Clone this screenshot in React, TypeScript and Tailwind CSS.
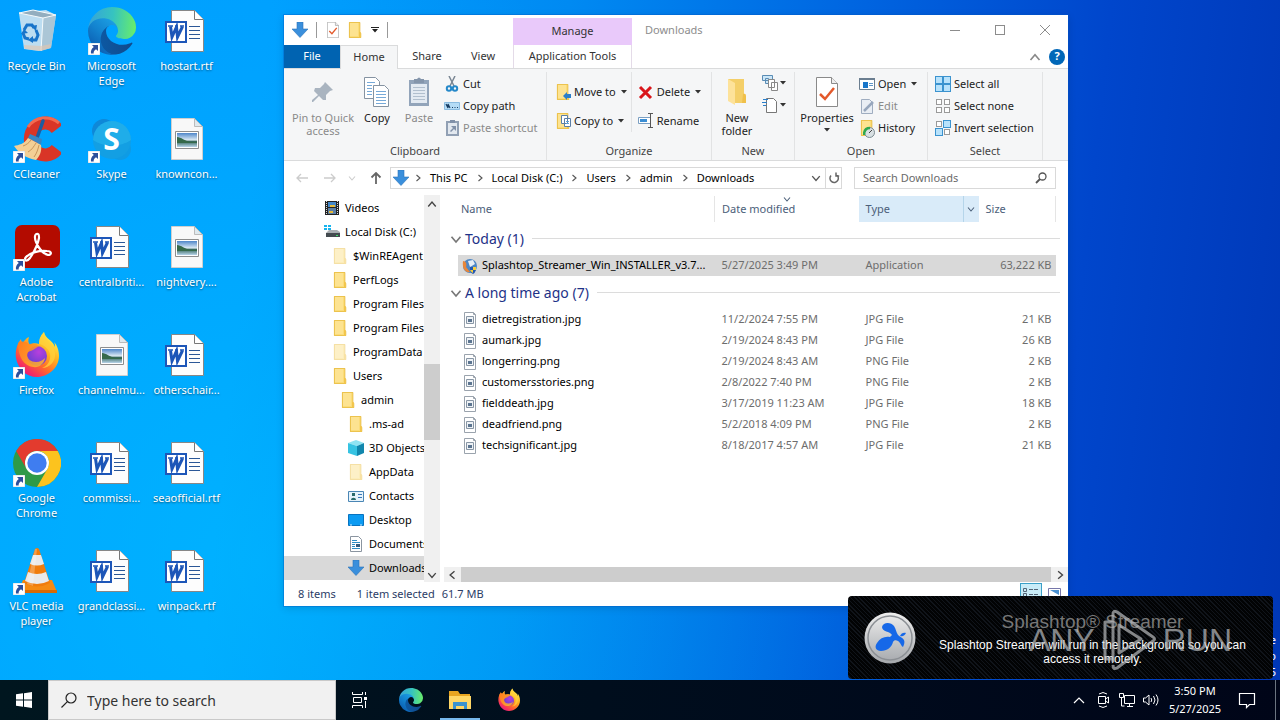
import React from "react";

type P = { className?: string };

const Edge = ({ className = "size-12" }: P) => (
  <svg viewBox="0 0 256 256" className={className} aria-hidden="true">
    <defs>
      <linearGradient id="ea" x1="60" y1="177" x2="240" y2="177" gradientUnits="userSpaceOnUse">
        <stop offset="0" stopColor="#0c59a4" /><stop offset="1" stopColor="#114a8b" />
      </linearGradient>
      <linearGradient id="eb" x1="150" y1="90" x2="40" y2="220" gradientUnits="userSpaceOnUse">
        <stop offset="0" stopColor="#1b9de2" /><stop offset=".5" stopColor="#1383cf" /><stop offset="1" stopColor="#0c62b5" />
      </linearGradient>
      <linearGradient id="ec" x1="10" y1="70" x2="250" y2="90" gradientUnits="userSpaceOnUse">
        <stop offset="0" stopColor="#35a5d8" /><stop offset=".5" stopColor="#36c3c0" /><stop offset="1" stopColor="#66eb6e" />
      </linearGradient>
    </defs>
    <path fill="url(#ea)" d="M231 190.5a94 94 0 0 1-10.500 4.700 102 102 0 0 1-35.900 6.500c-47.300 0-88.500-32.500-88.500-74.300A31.500 31.500 0 0 1 112.500 100c-42.800 1.800-53.800 46.400-53.800 72.500 0 73.900 68 81.400 82.800 81.400 7.900 0 19.800-2.300 27-4.600l1.300-.4a128 128 0 0 0 66.600-52.800 4 4 0 0 0-5.300-5.600z" />
    <path fill="url(#eb)" d="M105.700 241.400A79 79 0 0 1 83 220a81 81 0 0 1 29.500-120c3.100-1.400 8.400-4.100 15.500-4a32 32 0 0 1 25.700 13 32 32 0 0 1 6.400 18.700c0-.2 24.400-79.600-80-79.600C36 48.100 0 89.800 0 126.400a130 130 0 0 0 12.100 56 128 128 0 0 0 156.400 67.100 75.500 75.500 0 0 1-62.800-8z" />
    <path fill="url(#ec)" d="M152.300 148.900c-.8 1-3.300 2.500-3.300 5.600 0 2.600 1.700 5.100 4.700 7.200 14.400 10 41.500 8.700 41.600 8.700a60 60 0 0 0 30.300-8.300A61.400 61.400 0 0 0 256 109.500c.3-22.400-8-37.300-11.300-44C223.500 24 177.700.3 128 .3A128 128 0 0 0 0 126.500c.5-36.500 36.800-66 80-66 3.500 0 23.500.3 42 10 16.300 8.600 24.900 19 30.900 29.300 6.100 10.600 7.200 24.100 7.200 29.500s-2.700 13.300-7.800 19.600z" />
  </svg>
);

const Firefox = ({ className = "size-12" }: P) => (
  <svg viewBox="0 0 48 48" className={className} aria-hidden="true">
    <defs>
      <linearGradient id="fa" x1="40" y1="5" x2="10" y2="44" gradientUnits="userSpaceOnUse">
        <stop offset="0" stopColor="#fff44f" /><stop offset=".35" stopColor="#ffb01f" /><stop offset=".62" stopColor="#ff6a2b" /><stop offset=".85" stopColor="#f5305f" /><stop offset="1" stopColor="#e31587" />
      </linearGradient>
      <radialGradient id="fb" cx=".6" cy=".3" r=".8">
        <stop offset="0" stopColor="#b83fdd" /><stop offset="1" stopColor="#5b3fd0" />
      </radialGradient>
      <linearGradient id="fc" x1="0" y1="0" x2="1" y2="1">
        <stop offset="0" stopColor="#ff7a1c" /><stop offset="1" stopColor="#ffbd2e" />
      </linearGradient>
    </defs>
    <path fill="url(#fa)" d="M31 1c-4 4-5 8-5 12-3-1-7-1-9 1-2-2-2-5-1-8-3 1-5 4-6 6-1-1-2-2-2-4-4 5-6 12-5 19 2 11 10 19 21 19s22-9 22-21c0-6-2-11-5-14 1 2 1 3 1 5-2-7-10-8-11-15z" />
    <circle cx="24" cy="25" r="10" fill="url(#fb)" />
    <path fill="url(#fc)" d="M5 12c3-2 7-2 11 1 3-1 7-1 10 2-2 1-4 3-6 4-2 1-5 1-6 4 0 5 4 8 9 8 4 0 7-2 9-4-1 6-6 10-12 9C11 35 5 26 5 12z" opacity=".85" />
    <path fill="#ffd23c" d="M31 1c-4 4-5 8-5 12 5 1 10 5 11 10 1 6-2 12-8 14 8 0 14-7 13-15-1-8-10-12-11-21z" opacity=".75" />
  </svg>
);

const Shortcut = () => (
  <svg viewBox="0 0 12 12" className="absolute bottom-0 left-0 size-3" aria-hidden="true">
    <path fill="#fff" stroke="#b9c4cf" strokeWidth=".6" d="M0 0h12v12H0z" />
    <path fill="#2c4f9c" d="M4 2h6v6L8 6.200C6 7.500 5.500 8.500 5.700 10.500H3C2.500 8 3.500 5.600 5.800 4z" />
  </svg>
);

const Recycle = () => (
  <svg viewBox="0 0 48 48" className="size-12" aria-hidden="true">
    <path fill="#dde8ef" opacity=".85" d="M6 6 33 3l10 5-5 33-12 3-15-2z" />
    <path fill="#a9c3d3" opacity=".9" d="m30 11 13-3-5 33-10 3z" />
    <path fill="#93aebf" d="m6 6 14-3 23 5-13 3z" />
    <path fill="none" stroke="#f5fafc" d="m6 6 14-3 23 5-13 3zM30 11l-2 33" />
    <path fill="#e5c6ad" opacity=".6" d="m11 38 17 1 10-2-1 4-10 3-15-2z" />
    <g fill="none" stroke="#1874c9" strokeWidth="3"><path d="m11 23 3-5h5l2 3" /><path d="m23 23 2 5-2 5h-4" /><path d="m16 32-4-1-2-5" /></g>
    <path fill="#1874c9" d="m18 19 6-1-1 6zM20 29v7l-5-3zM8 27l3-5 4 4z" />
  </svg>
);

const Word = () => (
  <svg viewBox="0 0 48 48" className="size-12" aria-hidden="true">
    <path fill="#fdfdfd" stroke="#878787" d="M8.500 3.500h23l9 9v32h-32z" />
    <path fill="#fff" stroke="#777" d="M31.500 3.500v9h9" />
    <path stroke="#2b5797" d="M26 19.500h11M26 23.500h11M26 27.500h11M26 31.500h11" />
    <path fill="#fff" stroke="#1d56b8" strokeWidth="2" d="M3 15h20v20H3z" />
    <path fill="none" stroke="#1d56b8" strokeWidth="3" d="M7.500 19.500 9 30l4.500-10 1 10 5-10.500" />
    <path stroke="#1d56b8" strokeWidth="1.500" d="M5 19h5M12 19h3M17 19h4" />
  </svg>
);

const Photo = () => (
  <svg viewBox="0 0 48 48" className="size-12" aria-hidden="true">
    <defs><linearGradient id="ph" x1="0" y1="0" x2="0" y2="1"><stop offset="0" stopColor="#4e86c9" /><stop offset=".5" stopColor="#dceaf4" /><stop offset=".6" stopColor="#35675a" /><stop offset="1" stopColor="#b8d4ea" /></linearGradient></defs>
    <path fill="#f8f8f8" stroke="#cfcfcf" d="M8.500 3.500h23l8 8v33h-31z" />
    <path fill="#dfe9ee" stroke="#bbb" d="M31.500 3.500v8h8z" />
    <path fill="#fff" stroke="#8d8d8d" d="M12.500 16.500h23v17h-23z" />
    <path fill="url(#ph)" d="M14 18h20v14H14z" />
    <path fill="#35694a" d="M14 22c4 0 8 4 13 5h7v1H14z" />
  </svg>
);

const CCleaner = () => (
  <svg viewBox="0 0 48 48" className="size-12" aria-hidden="true">
    <path fill="none" stroke="#d93527" strokeWidth="13" d="M44 14A15 16 0 1 0 44 34" />
    <path fill="none" stroke="#f26a50" strokeWidth="3" d="M46 8A21 21 0 0 0 15 12" />
    <path stroke="#1d5ca0" strokeWidth="3.500" strokeLinecap="round" d="m30 6-6 17" />
    <path fill="#3787c6" d="m17 19 12 5-1 6-13-7z" />
    <path fill="#f3cf95" d="M15 23c-4 6-9 7-14 8 6 9 13 12 22 14 4-4 6-9 5-15z" />
    <path stroke="#c9955a" fill="none" d="M10 31c3-1 6-3 8-6M15 37c4-2 6-6 8-9M21 42c3-4 4-8 5-12" />
  </svg>
);

const Skype = () => (
  <div className="relative flex size-12 items-center justify-center">
    <svg viewBox="0 0 48 48" className="absolute inset-0" aria-hidden="true">
      <circle cx="16" cy="16" r="12" fill="#0e88d8" /><circle cx="32" cy="34" r="11" fill="#0f9be4" /><circle cx="24" cy="25" r="19" fill="#139fe3" />
      <path fill="#2bbbf0" opacity=".5" d="M5 25a19 19 0 0 1 38 0c-10 7-27 8-38 0z" />
    </svg>
    <span className="relative font-['Open_Sans',sans-serif] text-[30px] leading-7 font-bold text-white">S</span>
  </div>
);

const Acrobat = () => (
  <svg viewBox="0 0 48 48" className="size-12" aria-hidden="true">
    <rect x="2" y="2" width="45" height="43" rx="7" fill="#b30b00" />
    <path fill="none" stroke="#fff" strokeWidth="2.200" d="M25 11c-3-1-4 3-2 8 3 7 8 12 12 13 4 0 4-4-1-4-8-1-17 2-21 6-3 4 1 5 4 1 4-6 8-14 9-20 0-2 0-4-1-4z" />
  </svg>
);

const Chrome = () => (
  <svg viewBox="0 0 48 48" className="size-12" aria-hidden="true">
    <circle cx="24" cy="24" r="24" fill="#2e9a48" />
    <path fill="#e33b2e" d="M3.200 12A24 24 0 0 1 44.800 12H24a12 12 0 0 0-10.400 18z" />
    <path fill="#fcc31e" d="M44.800 12A24 24 0 0 1 24 48l10.400-18A12 12 0 0 0 24 12z" />
    <circle cx="24" cy="24" r="12" fill="#fff" /><circle cx="24" cy="24" r="9.700" fill="#3f7df0" />
  </svg>
);

const Vlc = () => (
  <svg viewBox="0 0 48 48" className="size-12" aria-hidden="true">
    <path fill="#f58a12" d="m10 33-5 12h39l-5-12z" /><path fill="#d86a05" d="M5 43h39v3H5z" />
    <path fill="#f07c0c" d="M22 2q2-2 4 0l11 34q-13 7-26 0z" />
    <path fill="#e9e9e9" d="M20 8h8l3 9q-7 3-14 0z" /><path fill="#e9e9e9" d="M15 25q9 4 18 0l3 9q-12 6-24 0z" />
    <path fill="#fff" opacity=".25" d="M22 2 14 37l6 2 4-37z" />
  </svg>
);

const Folder = ({ className = "size-4" }: P) => (
  <svg viewBox="0 0 16 16" className={className} aria-hidden="true">
    <path fill="#fbdc78" d="M2 0h11v10l1 1v5H2z" /><path fill="#ffe9a5" d="M3 1h8v13H3z" opacity=".55" /><path fill="none" stroke="#e6b93e" strokeWidth=".8" d="M2.400.400h10.500v10l.9.800v4.400H2.400z" /><path fill="#f3c54b" d="M12 10h1.500v5.500H12z" />
  </svg>
);

const Down = ({ className = "size-4" }: P) => (
  <svg viewBox="0 0 16 16" className={className} aria-hidden="true">
    <path fill="#3a8fdc" stroke="#2b74bb" strokeWidth=".6" d="M5 0h6v7h5l-8 8.500L0 7h5z" />
  </svg>
);

const Sheet = ({ className = "size-4" }: P) => (
  <svg viewBox="0 0 16 16" className={className} aria-hidden="true">
    <path fill="#fff" stroke="#9aa3ad" d="M2.500.5h9l2 2v13h-11z" /><path fill="none" stroke="#9aa3ad" d="M11.500.5v2h2" /><path fill="#eef2f6" stroke="#8896a5" d="M4.500 4.500h7v7h-7z" /><path fill="#5c7590" d="M6 7h4v3H6z" />
  </svg>
);

const Check = ({ className }: P) => (
  <svg viewBox="0 0 22 30" className={className} aria-hidden="true">
    <path fill="#fff" stroke="#8a8a8a" d="M.5.500h15l6 6v23H.5z" /><path fill="#eee" stroke="#8a8a8a" d="M15.500.5v6h6" /><path fill="none" stroke="#e3592b" strokeWidth="2.500" d="m4 17 5 5 9-11" />
  </svg>
);

const Chev = ({ dir, className = "size-2" }: P & { dir: "up" | "down" | "left" | "right" }) => {
  const d = { up: "m1 6 3-3.500 3 3.500", down: "m1 2.500 3 3.500 3-3.500", left: "M6 1 2.500 4 6 7", right: "M2.500 1 6 4 2.500 7" }[dir];
  return <svg viewBox="0 0 8 8" className={className} aria-hidden="true"><path d={d} fill="none" stroke="currentColor" strokeWidth="1.100" /></svg>;
};

const Caret = ({ className = "" }: P) => (
  <svg viewBox="0 0 6 4" className={`h-1 w-1.5 shrink-0 ${className}`} aria-hidden="true"><path d="M0 0h6L3 3.500z" fill="#333" /></svg>
);

const desktop: { label: string; icon: React.ReactNode; link?: boolean }[] = [
  { label: "Recycle Bin", icon: <Recycle /> },
  { label: "Microsoft Edge", icon: <Edge />, link: true },
  { label: "hostart.rtf", icon: <Word /> },
  { label: "CCleaner", icon: <CCleaner />, link: true },
  { label: "Skype", icon: <Skype />, link: true },
  { label: "knowncon...", icon: <Photo /> },
  { label: "Adobe Acrobat", icon: <Acrobat />, link: true },
  { label: "centralbriti...", icon: <Word /> },
  { label: "nightvery....", icon: <Photo /> },
  { label: "Firefox", icon: <Firefox />, link: true },
  { label: "channelmu...", icon: <Photo /> },
  { label: "otherschair...", icon: <Word /> },
  { label: "Google Chrome", icon: <Chrome />, link: true },
  { label: "commissi...", icon: <Word /> },
  { label: "seaofficial.rtf", icon: <Word /> },
  { label: "VLC media player", icon: <Vlc />, link: true },
  { label: "grandclassi...", icon: <Word /> },
  { label: "winpack.rtf", icon: <Word /> },
];

const Videos = () => (
  <svg viewBox="0 0 16 16" className="size-4" aria-hidden="true"><path fill="#222" d="M1 1h14v14H1z" /><path fill="#4386c7" d="M4 2h8v5H4z" /><path fill="#5b7ea5" d="M4 8h8v6H4z" /><path fill="#e4b93a" d="M6 5h5v2H6zM5 11h4v2H5z" /><path stroke="#ddd" strokeDasharray="1 1" d="M2.500 1v14M13.500 1v14" /></svg>
);
const Disk = () => (
  <svg viewBox="0 0 16 16" className="size-4" aria-hidden="true"><path fill="#18b4ee" d="M0 1h3v2H0zM4 1h3v2H4zM0 4h3v2H0zM4 4h3v2H4z" /><path fill="#a9aeb2" d="m3 8 2-2h8l3 2v1H2z" /><path fill="#444b50" d="M2 9h14v4H2z" /><path fill="#3ee06b" d="M12 11h2v1h-2z" /></svg>
);
const Cube = () => (
  <svg viewBox="0 0 16 16" className="size-4" aria-hidden="true"><path fill="#8fe4f3" d="m0 3 8-3 8 3-7 3z" /><path fill="#36c3e2" d="m0 3 9 3v10l-9-3z" /><path fill="#1187ad" d="m9 6 7-3v10l-7 3z" /></svg>
);
const Contact = () => (
  <svg viewBox="0 0 16 16" className="size-4" aria-hidden="true"><path fill="#e6f3fb" stroke="#4a86b5" d="M.5 3.500h15v10H.5z" /><path fill="#2a6a6a" d="M3 12c0-3 5-3 5 0zM4 5h3v3H4z" /><path stroke="#3a78b8" d="M10 6.500h4M10 9.500h4" /></svg>
);
const Monitor = () => (
  <svg viewBox="0 0 16 16" className="size-4" aria-hidden="true"><path fill="#0c9bf2" stroke="#0873c0" d="M.5 2.500h15v11H.5z" /><path stroke="#cfeaff" d="M2 13h2M12 13h2" /></svg>
);
const Doc = () => (
  <svg viewBox="0 0 16 16" className="size-4" aria-hidden="true"><path fill="#fff" stroke="#8b95a0" d="M2.500.5h8l3 3v12h-11z" /><path stroke="#2d8ec4" d="M4 4.500h5M4 6.500h8M4 8.500h3M4 10.500h3M4 12.500h8" /><path fill="#355c7d" d="M8 8h4v3H8z" /></svg>
);

const tree: { label: string; pad: string; icon: React.ReactNode; sel?: boolean }[] = [
  { label: "Videos", pad: "pl-10", icon: <Videos /> },
  { label: "Local Disk (C:)", pad: "pl-10", icon: <Disk /> },
  { label: "$WinREAgent", pad: "pl-12", icon: <Folder className="size-4 opacity-50" /> },
  { label: "PerfLogs", pad: "pl-12", icon: <Folder /> },
  { label: "Program Files", pad: "pl-12", icon: <Folder /> },
  { label: "Program Files (x86)", pad: "pl-12", icon: <Folder /> },
  { label: "ProgramData", pad: "pl-12", icon: <Folder className="size-4 opacity-50" /> },
  { label: "Users", pad: "pl-12", icon: <Folder /> },
  { label: "admin", pad: "pl-14", icon: <Folder /> },
  { label: ".ms-ad", pad: "pl-16", icon: <Folder /> },
  { label: "3D Objects", pad: "pl-16", icon: <Cube /> },
  { label: "AppData", pad: "pl-16", icon: <Folder className="size-4 opacity-50" /> },
  { label: "Contacts", pad: "pl-16", icon: <Contact /> },
  { label: "Desktop", pad: "pl-16", icon: <Monitor /> },
  { label: "Documents", pad: "pl-16", icon: <Doc /> },
  { label: "Downloads", pad: "pl-16", icon: <Down />, sel: true },
];

const files = [
  ["dietregistration.jpg", "11/2/2024 7:55 PM", "JPG File", "21 KB"],
  ["aumark.jpg", "2/19/2024 8:43 PM", "JPG File", "26 KB"],
  ["longerring.png", "2/19/2024 8:43 AM", "PNG File", "2 KB"],
  ["customersstories.png", "2/8/2022 7:40 PM", "PNG File", "2 KB"],
  ["fielddeath.jpg", "3/17/2019 11:23 AM", "JPG File", "18 KB"],
  ["deadfriend.png", "5/2/2018 4:09 PM", "PNG File", "2 KB"],
  ["techsignificant.jpg", "8/18/2017 4:57 AM", "JPG File", "21 KB"],
];

const Group = ({ label, width, children }: { label: string; width: string; children: React.ReactNode }) => (
  <section className={`flex shrink-0 flex-col border-r border-[#e2e3e4] ${width}`}>
    <div className="flex h-[71px] items-start">{children}</div>
    <h2 className="text-center leading-4 text-[#444]">{label}</h2>
  </section>
);

const Cmd = ({ icon, label, caret, off }: { icon: React.ReactNode; label: string; caret?: boolean; off?: boolean }) => (
  <button className={`flex h-[22px] items-center gap-[3px] whitespace-nowrap ${off ? "text-[#8a8a8a]" : "text-[#222]"}`}>
    {icon}<span>{label}</span>{caret && <Caret className="ml-0.5" />}
  </button>
);

const Big = ({ icon, label, width, off, caret }: { icon: React.ReactNode; label: string; width: string; off?: boolean; caret?: boolean }) => (
  <button className={`flex flex-col items-center leading-[13px] ${width} ${off ? "text-[#8a8a8a]" : "text-[#222]"}`}>
    <span className="flex h-[39px] items-center">{icon}</span><span>{label}</span>{caret && <Caret className="mt-1" />}
  </button>
);

const Squares = ({ fill }: { fill: boolean[] }) => (
  <svg viewBox="0 0 16 16" className="size-4" aria-hidden="true">
    {fill.map((f, i) => {
      const x = (i % 2) * 8 + 1.5, y = Math.floor(i / 2) * 8 + 1.5;
      return f
        ? <rect key={i} x={x - 1} y={y - 1} width="7" height="7" fill="#b8e2fb" stroke="#3b93cf" />
        : <rect key={i} x={x} y={y} width="5" height="5" fill="#fff" stroke="#9a9a9a" />;
    })}
  </svg>
);

const GroupRow = ({ label }: { label: string }) => (
  <tr>
    <th colSpan={4} scope="colgroup" className="h-[33px] p-0 font-normal">
      <div className="-mr-1 -ml-2 flex items-center text-[14px] text-[#1e3287]">
        <Chev dir="down" className="size-3 text-[#777]" />
        <span className="ml-[3px]">{label}</span>
        <span className="ml-2 h-px flex-1 bg-[#dcdcdc]" />
      </div>
    </th>
  </tr>
);

const Explorer = () => (
  <main className="absolute top-[15px] left-[284px] flex w-[784px] flex-col bg-white text-[11px] text-black shadow-[0_0_0_1px_rgba(0,90,200,0.35),0_2px_8px_rgba(0,0,0,0.15)]">
    <header className="flex h-[30px] items-stretch">
      <div className="flex w-[229px] items-center pl-2">
        <Down />
        <span className="ml-2 h-4 w-px bg-[#999]" />
        <Check className="ml-2.5 h-4 w-3" />
        <Folder className="ml-2 size-4" />
        <svg viewBox="0 0 8 6" className="ml-2 h-1.5 w-2" aria-hidden="true"><path d="M0 0h8v1H0zM1 2h6L4 5.500z" fill="#222" /></svg>
        <span className="ml-2 h-4 w-px bg-[#999]" />
      </div>
      <div className="mt-[3px] flex w-[119px] items-center justify-center bg-[#e9c9fa] text-[#333]">Manage</div>
      <h1 className="flex flex-1 items-center pl-[13px] text-[#8d8d8d]">Downloads</h1>
      <div className="flex items-center">
        <button aria-label="Minimize" className="flex w-[45px] justify-center"><span className="h-px w-2.5 bg-[#8c8c8c]" /></button>
        <button aria-label="Maximize" className="flex w-[45px] justify-center"><span className="size-2.5 border border-[#8c8c8c]" /></button>
        <button aria-label="Close" className="flex w-[46px] justify-center"><svg viewBox="0 0 10 10" className="size-2.5"><path d="m0 0 10 10M10 0 0 10" stroke="#8c8c8c" /></svg></button>
      </div>
    </header>
    <nav className="flex h-6 items-stretch border-b border-[#dadbdc] text-[#333]">
      <button className="w-14 bg-[#0063b1] text-white">File</button>
      <button className="-mb-px w-[58px] border border-b-0 border-[#dadbdc] bg-[#f5f6f7]">Home</button>
      <button className="w-[58px]">Share</button>
      <button className="w-[54px]">View</button>
      <button className="ml-[3px] w-[119px] border-x border-[#e4dbe8]">Application Tools</button>
      <div className="ml-auto flex items-center gap-2 pr-[3px]">
        <Chev dir="up" className="size-3 text-[#888]" />
        <button aria-label="Help" className="flex size-4 items-center justify-center rounded-full bg-[#0067b8] font-bold text-white">?</button>
      </div>
    </nav>
    <div className="flex h-[92px] border-b border-[#dadbdc] bg-[#f5f6f7] pt-[3px]">
      <Group label="Clipboard" width="w-[263px]">
        <Big off width="ml-1.5 w-[66px]" label="Pin to Quick access" icon={<svg viewBox="0 0 24 24" className="size-6"><path fill="#a9b4c0" d="m14 2 8 8-3 1-4 4 0 5-3 0-4-4-6 6-1 0 0-2 6-5-4-4 1-3 5 0 4-4z" /></svg>} />
        <Big width="w-[42px]" label="Copy" icon={<svg viewBox="0 0 26 30" className="h-[30px] w-[26px]"><g fill="#fff" stroke="#8593a2"><path d="M.5.5h11l4 4v17H.5z" /><path d="M9.500 8.500h11l4 4v17h-15z" /></g><path stroke="#76a9d8" d="M3 5.500h8M3 8.500h5M3 11.500h5M3 14.500h5M3 17.500h5M12 14.500h10M12 17.500h10M12 20.500h10M12 23.500h10M12 26.500h10" /></svg>} />
        <Big off width="w-[42px]" label="Paste" icon={<svg viewBox="0 0 22 30" className="h-[30px] w-[22px]"><path fill="#92a4ba" d="M1 3h20v26H1z" /><path fill="#e3eaf2" d="M3 7h16v19H3z" /><path fill="#8495ab" d="M6 2h3q2-3 4 0h3v4H6z" /><path stroke="#b1bfce" d="M5 10.500h12M5 13.500h12M5 16.500h12M5 19.500h12M5 22.500h12" /></svg>} />
        <div className="ml-1 flex flex-col pt-px">
          <Cmd label="Cut" icon={<svg viewBox="0 0 16 16" className="size-4"><path stroke="#7a8794" strokeWidth="1.500" d="m5 0 5 10M11 0 6 10" /><g fill="none" stroke="#2588c9" strokeWidth="2"><circle cx="5" cy="12.500" r="2.200" /><circle cx="11" cy="12.500" r="2.200" /></g></svg>} />
          <Cmd label="Copy path" icon={<svg viewBox="0 0 16 16" className="size-4"><path fill="#b5dcf6" stroke="#8abbe0" d="M.5 4.500h15v7H.5z" /><path fill="none" stroke="#173c62" strokeWidth="1.200" d="m2 6 2 4V6l2 4M8 9.500h1M10.500 9.500h1M13 9.500h1" /></svg>} />
          <Cmd off label="Paste shortcut" icon={<svg viewBox="0 0 16 16" className="size-4"><path fill="#e2e8ef" stroke="#91a0b4" strokeWidth="2" d="M3 2h11v13H3z" /><path fill="#8090a8" d="M6 0h5v3H6zM7 6h5v5l-2-2-3 3-1-1 3-3z" /></svg>} />
        </div>
      </Group>
      <Group label="Organize" width="w-[165px]">
        <div className="flex flex-col gap-[7px] border-r border-[#e2e3e4] pt-[9px] pr-1 pl-2">
          <Cmd caret label="Move to" icon={<span className="relative"><Folder /><svg viewBox="0 0 8 8" className="absolute right-0 bottom-0 size-2"><path fill="#2b7fca" d="m0 4 4-4v2h4v4H4v2z" /></svg></span>} />
          <Cmd caret label="Copy to" icon={<span className="relative"><Folder /><svg viewBox="0 0 10 12" className="absolute right-0 bottom-0.5 h-3 w-2.5"><path fill="#fff" stroke="#5b7fa6" d="M.5.5h6v8h-6zM3.500 3.500h6v8h-6z" /><path stroke="#5b9fd6" d="M5 6.500h3M5 8.500h3" /></svg></span>} />
        </div>
        <div className="flex flex-col gap-[7px] pt-[9px] pl-1.5">
          <Cmd caret label="Delete" icon={<svg viewBox="0 0 16 16" className="size-4"><path d="m2 3 11 11M13 3 2 14" stroke="#d9161b" strokeWidth="3" /></svg>} />
          <Cmd label="Rename" icon={<svg viewBox="0 0 16 16" className="size-4"><path fill="#fff" stroke="#7b9fc2" d="M.5 4.500h12v6H.5z" /><path fill="#3b8ed4" d="M2 6h7v3H2z" /><path fill="none" stroke="#555" d="M10 .5h5M12.500.5v14M10 14.500h5" /></svg>} />
        </div>
      </Group>
      <Group label="New" width="w-[83px]">
        <Big width="w-[50px]" label="New folder" icon={<svg viewBox="0 0 20 28" className="h-7 w-5"><path fill="#f4cf69" d="M1 1h16v20l-1 4H6z" /><path fill="#fde29a" d="M1 1l7 4v22l-7-4z" /><path fill="#f0c04a" d="M16 16c3-1 3 1 3 3v6h-4z" /></svg>} />
        <div className="flex flex-col">
          <button aria-label="New item" className="flex h-[22px] items-center gap-0.5"><svg viewBox="0 0 16 16" className="size-4"><path fill="#cce7f8" stroke="#5a8cb5" d="M.5.500h10v5H.5zM3.500 3.500h3v5h-3z" /><path fill="#fff" stroke="#888" d="M6.500 4.500h6v8h-6zM9.500 7.500h6v8h-6z" /></svg><Caret /></button>
          <button aria-label="Easy access" className="flex h-[22px] items-center gap-0.5"><svg viewBox="0 0 16 16" className="size-4"><path fill="#fff" stroke="#777" d="M4.500 1.500h7l3 3v11h-10z" /><path stroke="#2b7fca" d="M1 2.500h5M0 5.500h5M1 8.500h3" /></svg><Caret /></button>
        </div>
      </Group>
      <Group label="Open" width="w-[133px]">
        <Big caret width="w-[64px]" label="Properties" icon={<Check className="h-[30px] w-[22px]" />} />
        <div className="flex flex-col pt-px">
          <Cmd caret label="Open" icon={<svg viewBox="0 0 16 16" className="size-4"><path fill="#fff" stroke="#6b7e90" d="M.5 2.500h15v11H.5z" /><path fill="#6b7e90" d="M0 2h16v2H0z" /><path fill="#1976c9" d="M4 6h5v6H4z" /><path stroke="#5f96c7" d="M10 7.500h4M10 9.500h4" /></svg>} />
          <Cmd off label="Edit" icon={<svg viewBox="0 0 16 16" className="size-4"><path fill="#e9eef4" stroke="#9fadc0" d="M2.500 1.500h8l3 3v11h-11z" /><path stroke="#97a7bd" strokeWidth="2.500" d="m5 13 9-9" /></svg>} />
          <Cmd label="History" icon={<span className="relative"><Folder /><svg viewBox="0 0 12 12" className="absolute right-0 -bottom-0.5 size-3"><circle cx="6.500" cy="6.500" r="5" fill="#d9e0e3" stroke="#7b8a91" /><path fill="none" stroke="#2fa84f" strokeWidth="2.500" d="M1 9C1 4 3 2 7 2" /><path stroke="#444" d="m6 7 3-3" /></svg></span>} />
        </div>
      </Group>
      <Group label="Select" width="w-[115px]">
        <div className="flex flex-col pt-px pl-[7px]">
          <Cmd label="Select all" icon={<Squares fill={[true, true, true, true]} />} />
          <Cmd label="Select none" icon={<Squares fill={[false, false, false, false]} />} />
          <Cmd label="Invert selection" icon={<Squares fill={[false, true, true, false]} />} />
        </div>
      </Group>
    </div>
    <div className="flex h-[34px] items-center pr-3 pl-3">
      <div className="flex w-[94px] items-center gap-3 text-[#ccc]">
        <svg viewBox="0 0 12 10" className="h-2.5 w-3"><path d="M12 5H1M5 1 1 5l4 4" fill="none" stroke="#ccc" strokeWidth="1.300" /></svg>
        <svg viewBox="0 0 12 10" className="ml-1 h-2.5 w-3"><path d="M0 5h11M7 1l4 4-4 4" fill="none" stroke="#ccc" strokeWidth="1.300" /></svg>
        <Chev dir="down" className="size-2" />
        <svg viewBox="0 0 12 12" className="ml-0.5 size-3"><path d="M6 12V1M1.500 5.500 6 1l4.500 4.500" fill="none" stroke="#666" strokeWidth="1.800" /></svg>
      </div>
      <div className="flex h-[22px] w-[452px] items-center border border-[#d9d9d9] pl-0.5">
        <Down className="-mr-[3px] size-4" />
        {["This PC", "Local Disk (C:)", "Users", "admin", "Downloads"].map((c) => (
          <React.Fragment key={c}>
            <Chev dir="right" className="mx-2 size-2 text-[#555]" />
            <button>{c}</button>
          </React.Fragment>
        ))}
        <Chev dir="down" className="mr-1 ml-auto size-2.5 text-[#555]" />
        <button aria-label="Refresh" className="flex h-full w-4 items-center justify-center border-l border-[#d9d9d9]">
          <svg viewBox="0 0 12 12" className="size-3"><path d="M9 3.500A4.200 4.200 0 1 1 4 2.500M4 .5v3.500H.8" transform="matrix(-1 0 0 1 12 0)" fill="none" stroke="#666" strokeWidth="1.500" /></svg>
        </button>
      </div>
      <label className="ml-3 flex h-[22px] flex-1 items-center border border-[#d9d9d9] px-2">
        <input aria-label="Search Downloads" placeholder="Search Downloads" className="min-w-0 flex-1 outline-none placeholder:text-[#6a6a6a]" />
        <svg viewBox="0 0 12 12" className="size-3"><circle cx="7.500" cy="4.500" r="3.500" fill="none" stroke="#555" strokeWidth="1.300" /><path d="M5 7 1 11" stroke="#555" strokeWidth="1.800" /></svg>
      </label>
    </div>
    <div className="flex">
      <div className="w-[140px] overflow-hidden pt-px pb-0.5">
        <ul>
          {tree.map((t) => (
            <li key={t.label} className={t.sel ? "bg-[#d9d9d9]" : ""}>
              <button className={`flex h-6 items-center gap-[5px] whitespace-nowrap ${t.pad}`}><span className="shrink-0">{t.icon}</span>{t.label}</button>
            </li>
          ))}
        </ul>
      </div>
      <div className="flex w-4 flex-col items-center bg-[#f0f0f0] pt-1 pb-0.5 text-[#444]">
        <Chev dir="up" className="size-2.5" />
        <div className="flex w-full flex-1 flex-col"><span className="flex-[155]" /><span className="flex-[75] bg-[#cdcdcd]" /><span className="flex-[130]" /></div>
        <Chev dir="down" className="size-2.5" />
      </div>
      <div className="flex min-w-0 flex-1 flex-col pt-px pl-1">
        <div className="flex-1 pr-3 pl-3.5">
          <table className="w-full table-fixed border-collapse text-left">
            <colgroup><col /><col className="w-36" /><col className="w-30" /><col className="w-[77px]" /></colgroup>
            <thead>
              <tr className="text-[#4c607a]">
                <th className="h-[26px] border-r border-[#e5e5e5] pl-[3px] font-normal">Name</th>
                <th className="relative pl-[7px] font-normal">Date modified<Chev dir="down" className="absolute -top-px left-1/2 -ml-1 size-2" /></th>
                <th className="bg-[#d9ebf9] p-0 pl-[7px] font-normal"><div className="flex h-[26px] items-center justify-between">Type<button aria-label="Filter by type" className="flex h-full w-4 items-center justify-center border-l border-[#b5d5ea]"><Chev dir="down" /></button></div></th>
                <th className="border-r border-[#e5e5e5] pl-[7px] font-normal">Size</th>
              </tr>
            </thead>
            <tbody className="text-[#6d6d6d]">
              <GroupRow label="Today (1)" />
              <tr className="bg-[#d9d9d9]">
                <td className="h-[21px] p-0 pl-1 text-black">
                  <div className="flex items-center gap-1 whitespace-nowrap">
                    <svg viewBox="0 0 16 16" className="size-4 shrink-0"><circle cx="8" cy="8" r="7" fill="#4d86c4" /><path fill="#e8863a" d="M1 3c3 0 4 3 3 6l4 5C3 15 0 10 1 3z" /><path fill="#e7eef5" d="m6 3 5-1 2 4-5 3z" /><path fill="#2458b0" d="M8 9h6v3q-1 3-3 4-2-1-3-4z" /><path fill="#f7cf3c" d="M11 9h3v3h-3zM8 12h3v3q-2-1-3-3z" /></svg>
                    Splashtop_Streamer_Win_INSTALLER_v3.7...
                  </div>
                </td>
                <td className="p-0 pl-[7px]">5/27/2025 3:49 PM</td><td className="p-0 pl-[7px]">Application</td><td className="p-0 pr-1 text-right">63,222 KB</td>
              </tr>
              <GroupRow label="A long time ago (7)" />
              {files.map((f) => (
                <tr key={f[0]}>
                  <td className="h-[21px] p-0 pl-1 text-black"><div className="flex items-center gap-1"><Sheet />{f[0]}</div></td>
                  <td className="p-0 pl-[7px]">{f[1]}</td><td className="p-0 pl-[7px]">{f[2]}</td><td className="p-0 pr-1 text-right">{f[3]}</td>
                </tr>
              ))}
            </tbody>
          </table>
        </div>
        <div className="flex h-[15px] items-center bg-[#f0f0f0] px-[3px] text-[#444]">
          <Chev dir="left" className="size-2.5" /><span className="mx-1 h-full flex-1 bg-[#cdcdcd]" /><Chev dir="right" className="size-2.5" />
        </div>
      </div>
    </div>
    <footer className="flex h-6 items-center pr-1.5 pl-[14px] text-[#2b3c66]">
      <span>8 items</span><span className="ml-[21px]">1 item selected</span><span className="ml-[7px]">61.7 MB</span>
      <button aria-label="Details view" className="ml-auto flex h-[22px] w-[22px] items-center justify-center border border-[#3ba0c8] bg-[#c9ecf8]"><svg viewBox="0 0 16 12" className="h-3 w-4"><path fill="none" stroke="#567" d="M.5.500h3v3h-3zM.5 5.500h3v3h-3zM6 1.500h4M11 1.500h4M6 6.500h4M11 6.500h4" /></svg></button>
      <button aria-label="Large icons view" className="ml-1 flex size-4 items-center justify-center"><svg viewBox="0 0 13 12" className="h-3 w-[13px]"><path fill="#fff" stroke="#77a" d="M.5.5h12v11H.5z" /><path fill="#4a90cf" d="M2 2h9v5z" /></svg></button>
    </footer>
  </main>
);

export default function App() {
  return (
    <div className="relative flex h-screen flex-col overflow-hidden bg-[radial-gradient(ellipse_640px_620px_at_20%_78%,rgba(0,200,255,0.45),transparent),linear-gradient(96deg,#00a0ff_0%,#009fff_20%,#008af2_42%,#0064e0_64%,#0046cc_82%,#0037b6_100%)] font-['Noto_Sans',sans-serif] text-[11px]">
      <div className="relative flex-1">
        <ul className="-ml-px grid w-[225px] auto-rows-[108px] grid-cols-3">
          {desktop.map((d) => (
            <li key={d.label} className="flex justify-center pt-[7px]">
              <button className="flex w-full flex-col items-center text-white">
                <span className="relative">{d.icon}{d.link && <Shortcut />}</span>
                <span className="mt-[3px] max-w-[74px] leading-[15px] [text-shadow:0_1px_2px_rgba(0,0,0,0.5)]">{d.label}</span>
              </button>
            </li>
          ))}
        </ul>
        <Explorer />
        <div className="absolute right-1 bottom-0 text-right leading-4 text-white"><p>e</p><p>o</p><p>5</p></div>
        <aside className="absolute right-[7px] bottom-px flex h-[83px] w-[425px] items-center rounded bg-[repeating-linear-gradient(45deg,#020304_0_2px,#10141a_2px_3px)] font-['Liberation_Sans',sans-serif] text-white">
          <svg viewBox="0 0 52 52" className="ml-4 size-[52px] shrink-0" aria-hidden="true">
            <defs><linearGradient id="sp" x1="0" y1="0" x2="0" y2="1"><stop offset="0" stopColor="#eee" /><stop offset="1" stopColor="#a5a8ac" /></linearGradient></defs>
            <circle cx="26" cy="26" r="25.500" fill="url(#sp)" /><circle cx="26" cy="26" r="22" fill="none" stroke="#8b8f94" strokeWidth="1.500" />
            <path fill="#1668e8" d="M18 15c1-5 9-5 12-1 2 3 2 6 4 9 2 2 4 2 6 5 1 2 0 5-1 7-2-1-2-4-5-6-2-1-4-1-5 1-1 5-6 9-12 9-5 0-7-4-4-8 3-5 8-7 13-6l2-2c-2-4-10-3-10-8z" /><path fill="#1668e8" d="M36 24c1-3 4-4 6-3-1 2-3 4-6 3z" />
          </svg>
          <div className="flex-1 pr-3 pl-2 text-center">
            <h2 className="text-[19px] leading-6 text-[#777]">Splashtop® Streamer</h2>
            <p className="pt-1 text-[12px] leading-[14px]">Splashtop Streamer will run in the background so you can access it remotely.</p>
          </div>
        </aside>
        <div className="pointer-events-none absolute right-12 bottom-2 flex h-16 items-center gap-1 font-['Liberation_Sans',sans-serif] text-[32px] text-[#b9bbbd] opacity-70">
          <span>ANY</span>
          <svg viewBox="0 0 60 64" className="h-16 w-[60px]" aria-hidden="true"><path fill="none" stroke="#b9bbbd" strokeWidth="3" strokeLinejoin="round" d="M14 54V6q0-4 4-2l36 25q3 2 0 4L18 60q-4 2-4-3M14 14H6v37h8M20 17v28l22-14z" /></svg>
          <span>RUN</span>
        </div>
      </div>
      <footer className="flex h-10 items-center bg-[linear-gradient(90deg,#00161f,#000a1c_70%,#000518)] text-white">
        <button aria-label="Start" className="flex w-12 justify-center"><svg viewBox="0 0 16 16" className="size-4"><path fill="#fff" d="M0 2.300 7 1.300V7.500H0zM8 1.200 16 0v7.500H8zM0 8.500h7v6.200l-7-1zM8 8.500h8V16l-8-1.200z" /></svg></button>
        <label className="flex h-10 w-72 items-center border border-[#c9c9c9] bg-[#f1f1f1] pl-3 text-[#222]">
          <svg viewBox="0 0 16 16" className="size-4 shrink-0"><circle cx="10" cy="6" r="5" fill="none" stroke="#222" strokeWidth="1.200" /><path d="M6.400 9.600.5 15.500" stroke="#222" strokeWidth="1.200" /></svg>
          <input aria-label="Type here to search" placeholder="Type here to search" className="ml-2.5 min-w-0 flex-1 text-[14px] outline-none placeholder:text-[#333]" />
        </label>
        <button aria-label="Task view" className="flex w-12 justify-center"><svg viewBox="0 0 16 16" className="size-4"><path fill="none" stroke="#fff" d="M.5 0v2.500h10V0M.5 16v-2.500h10V16M1.500 5.500h8v5h-8zM13.500 0v3M13.500 9v7" /><path fill="#fff" d="M12 5h3v3h-3z" /></svg></button>
        <button aria-label="Microsoft Edge" className="ml-0.5 flex w-[49px] justify-center"><Edge className="size-6" /></button>
        <button aria-label="File Explorer" className="ml-[5px] flex h-full w-10 flex-col items-center justify-end border-b-2 border-[#76b9ed] pb-2"><svg viewBox="0 0 22 20" className="h-5 w-[22px]"><path fill="#e8a520" d="M0 1h9l2 3h10v4H0z" /><path fill="#ffd766" d="M0 6h22v13H0z" /><path fill="#3a93cf" d="M4 12h14v7h-3v-3H7v3H4z" /></svg></button>
        <button aria-label="Firefox" className="ml-px flex w-14 justify-center"><Firefox className="size-6" /></button>
        <div className="ml-auto flex items-center">
          <button aria-label="Show hidden icons" className="flex w-6 justify-center"><svg viewBox="0 0 12 7" className="h-[7px] w-3"><path d="m1 6 5-5 5 5" fill="none" stroke="#fff" strokeWidth="1.200" /></svg></button>
          <button aria-label="Meet now" className="flex w-6 justify-center"><svg viewBox="0 0 16 16" className="size-4"><path d="M3.500 4.500h7v7h-7zM10.500 7l3-2v6l-3-2M4 2q4-3 8 0M4 14q4 3 8 0" fill="none" stroke="#fff" /></svg></button>
          <button aria-label="Network" className="flex w-6 justify-center"><svg viewBox="0 0 16 16" className="size-4"><path d="M5.500 3.500h10v8h-10zM8 14.500h6M10.500 12v2M.5 1.500h4v4h-4zM2.500 6v8h3" fill="none" stroke="#fff" /></svg></button>
          <button aria-label="Volume" className="flex w-6 justify-center"><svg viewBox="0 0 16 16" className="size-4"><path d="M.5 6v4h2L6 13V3L2.500 6zM8 6q1.500 2 0 4M10.500 4q3 4 0 8M13 2.500q4 5.500 0 11" fill="none" stroke="#fff" /></svg></button>
          <div className="w-16 text-center leading-[18px]"><p>3:50 PM</p><p>5/27/2025</p></div>
          <button aria-label="Notifications" className="flex w-10 justify-center"><svg viewBox="0 0 18 18" className="size-[18px]"><path d="M1.500 2.500h15v11h-5l-3 3v-3h-7z" fill="none" stroke="#fff" strokeWidth="1.200" /></svg></button>
          <span className="ml-2 h-10 w-[5px] border-l border-[#6b7480]" />
        </div>
      </footer>
    </div>
  );
}
